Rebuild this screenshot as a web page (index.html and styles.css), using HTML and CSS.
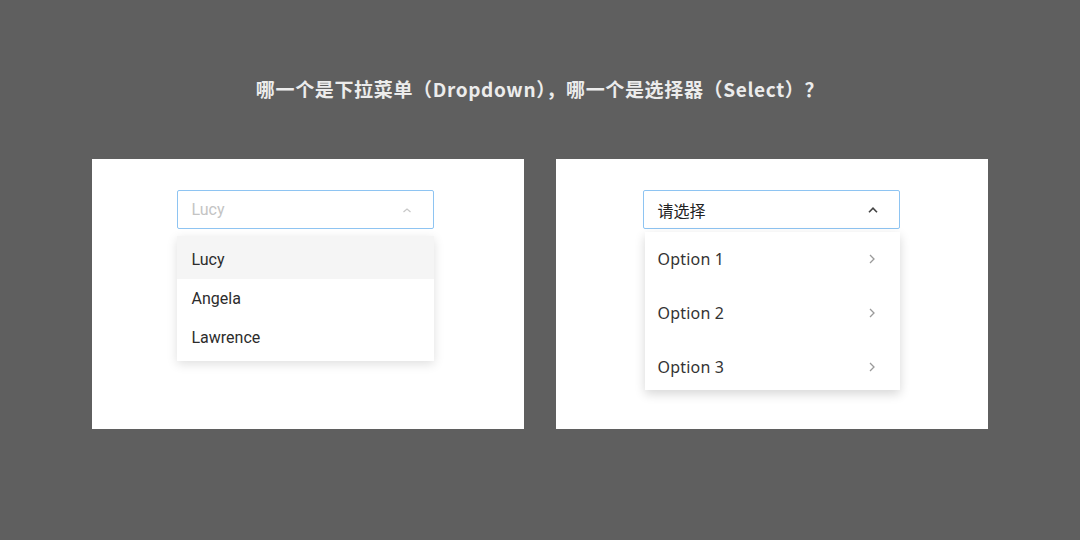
FILE: index.html
```html
<!DOCTYPE html>
<html lang="zh">
<head>
<meta charset="utf-8">
<link rel="stylesheet" href="styles.css">
</head>
<body>
<div class="page">
  <h1 class="title">哪一个是下拉菜单（Dropdown），哪一个是选择器（Select）？</h1>
  <div class="cards">
    <div class="card">
      <div class="field field-a">
        <div class="select select-a">
          <span class="ph">Lucy</span>
          <svg class="caret" width="12" height="8" viewBox="0 0 12 8"><path d="M2.5 6 L6 3 L9.5 6" fill="none" stroke="#c8c8c8" stroke-width="1.3"/></svg>
        </div>
        <ul class="menu menu-a">
          <li class="item-a active">Lucy</li>
          <li class="item-a">Angela</li>
          <li class="item-a">Lawrence</li>
        </ul>
      </div>
    </div>
    <div class="card">
      <div class="field field-b">
        <div class="select select-b">
          <span class="val">请选择</span>
          <svg class="caret" width="12" height="8" viewBox="0 0 12 8"><path d="M2 6.2 L6 2.2 L10 6.2" fill="none" stroke="#444" stroke-width="1.6"/></svg>
        </div>
        <ul class="menu menu-b">
          <li class="item-b"><span>Option 1</span><svg width="8" height="12" viewBox="0 0 8 12"><path d="M2 2 L6 6 L2 10" fill="none" stroke="#9a9a9a" stroke-width="1.3"/></svg></li>
          <li class="item-b"><span>Option 2</span><svg width="8" height="12" viewBox="0 0 8 12"><path d="M2 2 L6 6 L2 10" fill="none" stroke="#9a9a9a" stroke-width="1.3"/></svg></li>
          <li class="item-b last"><span>Option 3</span><svg width="8" height="12" viewBox="0 0 8 12"><path d="M2 2 L6 6 L2 10" fill="none" stroke="#9a9a9a" stroke-width="1.3"/></svg></li>
        </ul>
      </div>
    </div>
  </div>
</div>
</body>
</html>
```
FILE: styles.css
```css
* { box-sizing: border-box; }
html, body { margin: 0; padding: 0; }
body {
  width: 1080px;
  height: 540px;
  background: #5f5f5f;
  font-family: "Noto Sans", "Noto Sans CJK SC", sans-serif;
  overflow: hidden;
}
.page {
  display: flex;
  flex-direction: column;
  align-items: center;
  padding-top: 74px;
}
.title {
  margin: 0;
  font-size: 19px;
  line-height: 30px;
  font-weight: 700;
  color: #ececec;
  font-family: "Noto Sans CJK SC", sans-serif;
  letter-spacing: 0.65px;
}
.cards {
  display: flex;
  gap: 32px;
  margin-top: 55px;
}
.card {
  width: 432px;
  height: 270px;
  background: #fff;
  display: flex;
  justify-content: center;
  padding-top: 31px;
}
.field {
  width: 257px;
  display: flex;
  flex-direction: column;
}
.field-a { margin-right: 6px; }
.field-b { margin-right: 2px; }
.select {
  height: 39px;
  border: 1.5px solid #8ec4f2;
  border-radius: 2px;
  display: flex;
  align-items: center;
  justify-content: space-between;
  padding: 0 20px 0 14px;
  font-size: 16px;
}
.select-b { padding-left: 14px; }
.ph { color: #c4c4c4; font-family: Roboto, sans-serif; }
.val { color: #222; font-family: "Noto Sans CJK SC", sans-serif; }
.menu {
  list-style: none;
  margin: 0;
  padding: 0;
  background: #fff;
}
.menu-a {
  margin-top: 7px;
  padding-bottom: 4px;
  box-shadow: 0 3px 10px rgba(0,0,0,0.13);
}
.item-a {
  height: 39px;
  display: flex;
  align-items: center;
  padding-left: 15px;
  font-family: Roboto, sans-serif;
  font-size: 16px;
  color: #2c2c2c;
}
.item-a.active { height: 43px; padding-top: 4px; background: #f5f5f5; }
.menu-b {
  margin-top: 3px;
  margin-left: 2px;
  box-shadow: 0 4px 10px rgba(0,0,0,0.16);
}
.item-b {
  height: 54px;
  display: flex;
  align-items: center;
  justify-content: space-between;
  padding: 0 24px 0 13px;
  font-size: 16px;
  color: #333;
  font-family: "Noto Sans", sans-serif;
  letter-spacing: 0.2px;
}
.item-b.last { height: 50px; padding-top: 4px; }
```
